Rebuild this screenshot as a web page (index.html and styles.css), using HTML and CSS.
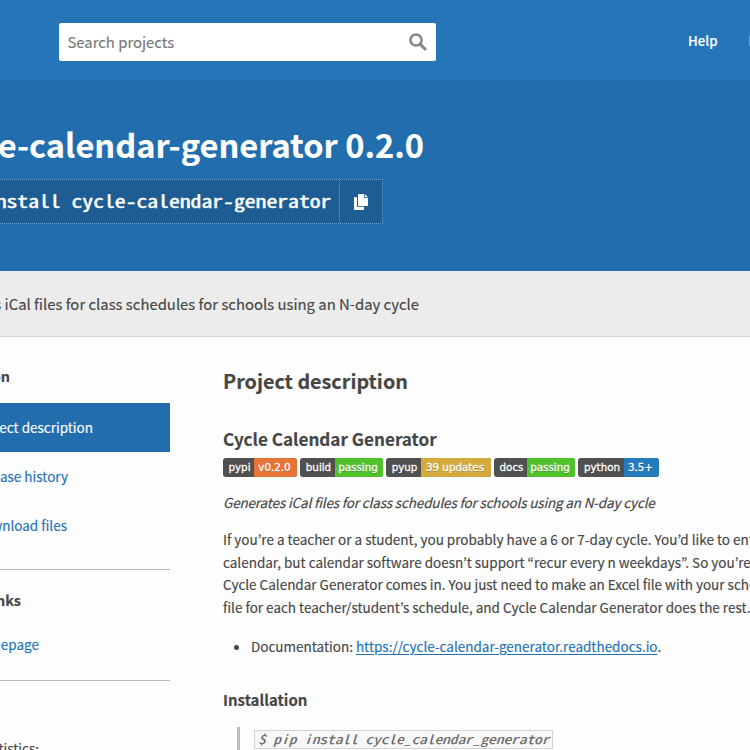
FILE: index.html
```html
<!DOCTYPE html>
<html lang="en">
<head>
<meta charset="utf-8">
<title>cycle-calendar-generator</title>
<link rel="stylesheet" href="styles.css">
</head>
<body>
<header class="site-header">
  <div class="search">
    <span class="search-hint">Search projects</span>
    <svg class="search-icon" viewBox="0 0 18 18"><circle cx="7" cy="7" r="5.6" fill="none" stroke="currentColor" stroke-width="2.5"/><path d="M11.4 11.4 16 16" stroke="currentColor" stroke-width="3" stroke-linecap="round"/></svg>
  </div>
  <nav class="nav"><a>Help</a><a>Docs</a></nav>
</header>
<section class="banner">
  <h1 class="title"><span>cycle-calendar-generator 0.2.0</span></h1>
  <div class="pip">
    <div class="pip-command"><span>pip install cycle-calendar-generator</span></div>
    <div class="pip-copy"><svg viewBox="0 0 14 16"><path fill="currentColor" d="M0 3.2h3v9.6h7v2.4a.8.8 0 0 1-.8.8H.8a.8.8 0 0 1-.8-.8z"/><path fill="currentColor" d="M4.8 0H10v4h4v7.2a.8.8 0 0 1-.8.8H4.8a.8.8 0 0 1-.8-.8V.8a.8.8 0 0 1 .8-.8z"/><path fill="currentColor" d="M10.8 0 14 3.2h-3.2z"/></svg></div>
  </div>
</section>
<section class="summary"><span>Generates iCal files for class schedules for schools using an N-day cycle</span></section>
<main class="page">
  <aside class="sidebar">
    <h2 class="side-title navigation">Navigation</h2>
    <a class="tab active">Project description</a>
    <a class="tab history">Release history</a>
    <a class="tab files">Download files</a>
    <section class="side-section links">
      <h2 class="side-title">Project links</h2>
      <a class="tab home">Homepage</a>
    </section>
    <section class="side-section stats">View statistics:</section>
  </aside>
  <article class="content">
    <h2 class="heading">Project description</h2>
    <h3 class="subheading">Cycle Calendar Generator</h3>
    <div class="badges">
      <span class="badge pypi"><b>pypi</b><i>v0.2.0</i></span>
      <span class="badge build"><b>build</b><i>passing</i></span>
      <span class="badge pyup"><b>pyup</b><i>39 updates</i></span>
      <span class="badge docs"><b>docs</b><i>passing</i></span>
      <span class="badge python"><b>python</b><i>3.5+</i></span>
    </div>
    <p class="tagline"><span>Generates iCal files for class schedules for schools using an N-day cycle</span></p>
    <p class="text">If you’re a teacher or a student, you probably have a 6 or 7-day cycle. You’d like to enter<br>calendar, but calendar software doesn’t support “recur every n weekdays”. So you’re<br>Cycle Calendar Generator comes in. You just need to make an Excel file with your schedule<br>file for each teacher/student’s schedule, and Cycle Calendar Generator does the rest.</p>
    <ul class="list"><li>Documentation: <a>https://cycle-calendar-generator.readthedocs.io</a>.</li></ul>
    <h4 class="install">Installation</h4>
    <blockquote class="quote"><code><span>$ pip install cycle_calendar_generator</span></code></blockquote>
  </article>
</main>
</body>
</html>
```
FILE: styles.css
```css
* { box-sizing: border-box; }
html { overflow: hidden; }
body {
  margin: 0;
  width: 750px;
  height: 750px;
  overflow: hidden;
  background: #fdfdfd;
  color: #464646;
  font-family: "Noto Sans CJK KR", "Noto Sans", sans-serif;
  font-size: 13.5px;
  white-space: nowrap;
  -webkit-text-stroke: .15px;
}
h1, h2, h3, h4, p, ul, blockquote { margin: 0; padding: 0; }

.site-header {
  display: flex;
  align-items: flex-start;
  height: 82px;
  padding: 23px 0 0 59px;
  background: #2575b8;
  border-bottom: 1px solid #216ba9;
}
.search {
  display: flex;
  flex: none;
  align-items: center;
  justify-content: space-between;
  width: 377px;
  height: 38px;
  padding: 0 9px 2px 8.5px;
  border-radius: 2px;
  background: #fff;
  color: #777;
  font-size: 14.85px;
}
.search-icon { width: 18px; height: 18px; margin-top: 2px; color: #858585; }
.nav {
  display: flex;
  gap: 31px;
  margin-left: 252px;
  color: #fff;
  font-size: 13.2px;
  font-weight: 500;
  line-height: 36px;
}

.banner { height: 189px; padding-top: 37px; background: #226dad; color: #fff; }
.title { display: flex; justify-content: flex-end; width: 424px; font-size: 32.6px; line-height: 50px; }
.pip {
  display: flex;
  width: 383px;
  height: 45px;
  margin-top: 10px;
  background: #1d5d94;
  border: 1px dotted #6d9fcb;
  border-left: 0;
}
.pip-command {
  display: flex;
  justify-content: flex-end;
  width: 340px;
  padding-right: 8px;
  border-right: 1px dotted #6d9fcb;
  font: 400 17.2px/42px "Noto Sans Mono CJK KR", "DejaVu Sans Mono", monospace;
  -webkit-text-stroke: .45px;
}
.pip-command span { transform: scaleX(1.26); transform-origin: right; }
.pip-copy { display: flex; flex: 1; align-items: center; justify-content: center; }
.pip-copy svg { width: 14px; height: 16px; }

.summary {
  display: flex;
  justify-content: flex-end;
  width: 750px;
  height: 66px;
  padding-right: 331px;
  background: #ececec;
  border-bottom: 1px solid #d3d3d3;
  font-size: 14.87px;
  line-height: 66px;
}

.page { display: flex; height: 413px; }
.sidebar { width: 170px; padding-top: 26px; }
.side-title { display: flex; justify-content: flex-end; font-size: 14.4px; line-height: 26px; }
.navigation { margin-bottom: 14px; padding-right: 160px; }
.tab { display: flex; justify-content: flex-end; height: 49px; line-height: 49px; color: #2472b6; }
.active { padding-right: 77px; background: #226dad; color: #fff; }
.history { padding-right: 102px; }
.files { padding-right: 103px; }
.side-section { border-top: 1px solid #bbb; }
.links { height: 111px; margin-top: 19px; padding-top: 17px; }
.links .side-title { padding-right: 149px; }
.home { padding-right: 131px; margin-top: 7px; }
.stats { display: flex; justify-content: flex-end; padding: 56px 131px 0 0; line-height: 22px; }

.content { width: 527px; margin-left: 53px; padding-top: 26px; }
.heading { font-size: 19.75px; line-height: 36px; }
.subheading { margin-top: 25px; font-size: 17.1px; line-height: 30px; }
.badges { display: flex; gap: 3px; margin-top: 4px; }
.badge {
  display: flex;
  height: 19px;
  overflow: hidden;
  border-radius: 3px;
  background: #505050;
  color: #fff;
  font: 10.3px/19px "DejaVu Sans", sans-serif;
  text-shadow: 0 1px 0 rgba(0, 0, 0, .3);
  -webkit-text-stroke: .3px;
}
.badge b, .badge i { display: flex; justify-content: center; font-weight: 400; font-style: normal; }
.badge b { padding-left: 2px; }
.badge i { flex: 1; padding-right: 2px; }
.pypi { width: 74px; }
.pypi b { width: 31px; }
.pypi i { background: #e87337; }
.build { width: 83px; }
.build b { width: 35px; }
.build i, .docs i { background: #4fc12b; }
.pyup { width: 105px; }
.pyup b { width: 35px; }
.pyup i { background: #d4aa3c; }
.docs { width: 81px; }
.docs b { width: 33px; }
.python { width: 81px; }
.python b { width: 46px; }
.python i { background: #267bbf; }
.tagline { margin-top: 14px; font-style: italic; line-height: 22px; letter-spacing: -.155px; }
.text { margin-top: 15px; line-height: 22.7px; }
.list { margin-top: 16px; padding-left: 28px; line-height: 22px; }
.list a { color: #2472b6; text-decoration: underline; text-underline-offset: 2px; }
.install { margin-top: 30px; font-size: 15px; line-height: 26px; }
.quote { height: 50px; margin: 14px 0 0 14px; padding: 3px 0 0 14px; border-left: 3px solid #bbb; line-height: 19px; }
.quote code {
  display: inline-block;
  width: 299px;
  height: 19px;
  padding: 0 3px;
  border: 1px solid #d3d3d3;
  background: #f7f7f7;
  color: #666;
  vertical-align: top;
  font: italic 12.5px/16px "Noto Sans Mono CJK KR", "DejaVu Sans Mono", monospace;
}
.quote code span { display: inline-block; transform: scaleX(1.227); transform-origin: left; }
```
